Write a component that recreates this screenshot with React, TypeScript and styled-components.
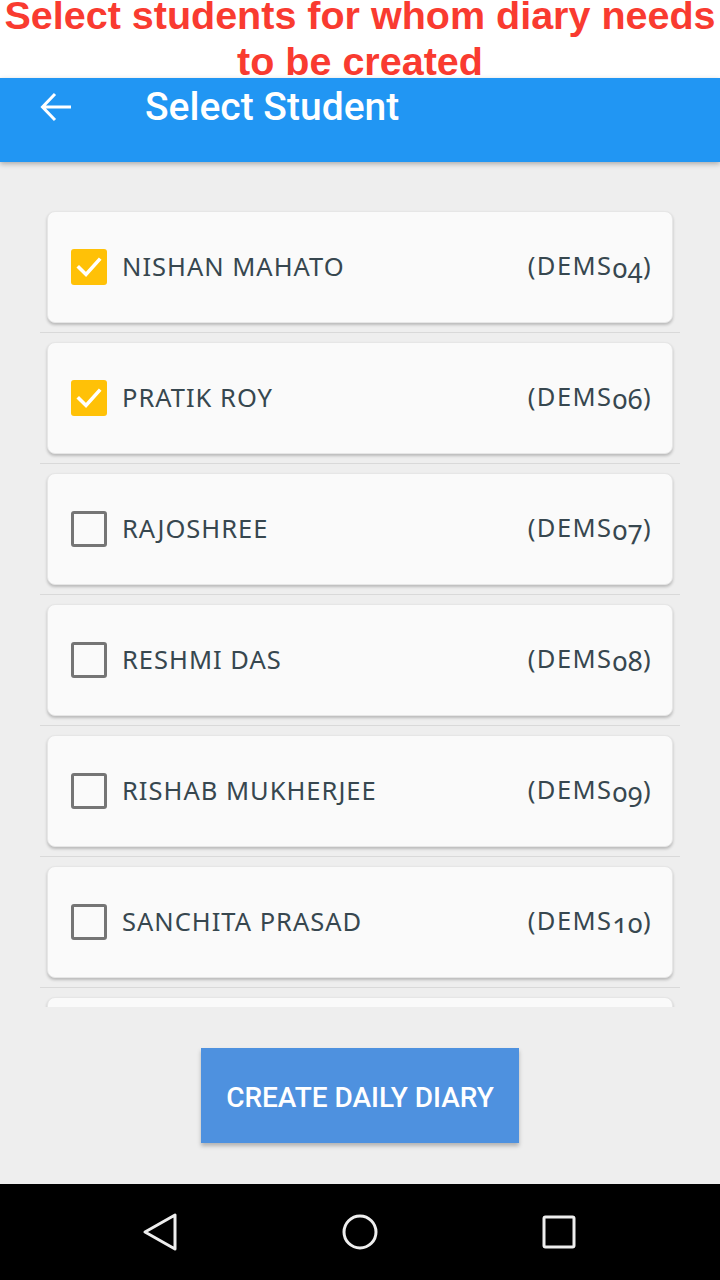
import React from 'react';
import styled, { createGlobalStyle } from 'styled-components';

const GlobalStyle = createGlobalStyle`
  html, body {
    margin: 0;
    padding: 0;
    background: #eeeeee;
  }
  * {
    box-sizing: border-box;
  }
`;

interface Student {
  id: string;
  name: string;
  code: string;
  checked: boolean;
}

const students: Student[] = [
  { id: '04', name: 'NISHAN MAHATO', code: '04', checked: true },
  { id: '06', name: 'PRATIK ROY', code: '06', checked: true },
  { id: '07', name: 'RAJOSHREE', code: '07', checked: false },
  { id: '08', name: 'RESHMI DAS', code: '08', checked: false },
  { id: '09', name: 'RISHAB MUKHERJEE', code: '09', checked: false },
  { id: '10', name: 'SANCHITA PRASAD', code: '10', checked: false },
  { id: '11', name: 'SHREYA SEN', code: '11', checked: false },
];

const Page = styled.div`
  width: 720px;
  height: 1280px;
  display: flex;
  flex-direction: column;
  background: #eeeeee;
  overflow: hidden;
`;

const Banner = styled.div`
  height: 78px;
  flex-shrink: 0;
  background: #ffffff;
  overflow: hidden;
  text-align: center;
  font-family: 'Liberation Sans', Arial, sans-serif;
  font-weight: 700;
  font-size: 39.5px;
  line-height: 46px;
  color: #f93b30;
  white-space: nowrap;
`;

const BannerText = styled.div`
  margin-top: -8px;
`;

const AppBar = styled.div`
  height: 84px;
  flex-shrink: 0;
  background: #2196f3;
  box-shadow: 0 2px 5px rgba(0, 0, 0, 0.28);
  position: relative;
  z-index: 1;
`;

const AppBarRow = styled.div`
  height: 58px;
  display: flex;
  align-items: center;
  padding-left: 40px;
`;

const BackButton = styled.div`
  width: 32px;
  height: 30px;
  display: flex;
  align-items: center;
  justify-content: center;
  margin-right: 73px;
`;

const Title = styled.div`
  font-family: Roboto, 'Noto Sans', sans-serif;
  font-weight: 500;
  font-size: 39px;
  color: #ffffff;
  line-height: 46px;
`;

const ListArea = styled.div`
  height: 845px;
  flex-shrink: 0;
  overflow: hidden;
  padding: 40px 40px 0;
`;

const Row = styled.div`
  padding: 9px 7px;
  border-bottom: 1px solid #d9d9d9;
`;

const Card = styled.div`
  height: 112px;
  background: #fafafa;
  border-radius: 8px;
  border: 1px solid #e6e6e6;
  box-shadow: 0 2px 3px rgba(0, 0, 0, 0.22);
  display: flex;
  align-items: center;
  padding: 0 20px 0 23px;
`;

const Box = styled.div<{ $checked: boolean }>`
  width: 36px;
  height: 36px;
  border-radius: 3px;
  flex-shrink: 0;
  display: flex;
  align-items: center;
  justify-content: center;
  background: ${p => (p.$checked ? '#ffc107' : 'transparent')};
  border: ${p => (p.$checked ? 'none' : '3px solid #757575')};
`;

const Name = styled.div`
  flex: 1;
  margin-left: 15px;
  font-family: 'Noto Sans', 'Open Sans', sans-serif;
  font-size: 25.5px;
  color: #37474f;
  letter-spacing: 1px;
  line-height: 30px;
  margin-top: -2px;
`;

const Code = styled.div`
  font-family: 'Noto Sans', 'Open Sans', sans-serif;
  font-size: 25.5px;
  color: #37474f;
  letter-spacing: 1.4px;
  line-height: 30px;
  margin-top: -2px;
`;

const Digits = styled.span`
  font-variant-numeric: oldstyle-nums;
  font-feature-settings: 'onum' 1;
  font-size: 27px;
  vertical-align: -3px;
  letter-spacing: 0.5px;
`;

const Footer = styled.div`
  flex: 1;
  display: flex;
  align-items: center;
  justify-content: center;
`;

const CreateButton = styled.button`
  width: 318px;
  height: 95px;
  border: none;
  border-radius: 0;
  background: #4e91df;
  color: #ffffff;
  font-family: Roboto, sans-serif;
  font-weight: 500;
  font-size: 28px;
  box-shadow: 0 3px 4px rgba(0, 0, 0, 0.25);
  padding: 4px 0 0;
`;

const NavBar = styled.div`
  height: 96px;
  flex-shrink: 0;
  background: #000000;
  display: flex;
  align-items: center;
  justify-content: space-between;
  padding: 0 142px 0 141px;
`;

const NavIcon = styled.div`
  width: 38px;
  height: 40px;
  display: flex;
  align-items: center;
  justify-content: center;
`;

const Check = () => (
  <svg width="26" height="22" viewBox="0 0 26 22">
    <path d="M3 11.5 L10 18.5 L23 4" fill="none" stroke="#fff" strokeWidth="3.6" strokeLinecap="square" />
  </svg>
);

export default function App() {
  return (
    <>
      <GlobalStyle />
      <Page>
        <Banner>
          <BannerText>
            Select students for whom diary needs
            <br />
            to be created
          </BannerText>
        </Banner>
        <AppBar>
          <AppBarRow>
            <BackButton>
              <svg width="32" height="30" viewBox="0 0 32 30">
                <path d="M31 15 H3 M15 2 L2.5 15 L15 28" fill="none" stroke="#fff" strokeWidth="3" />
              </svg>
            </BackButton>
            <Title>Select Student</Title>
          </AppBarRow>
        </AppBar>
        <ListArea>
          {students.map(s => (
            <Row key={s.id}>
              <Card>
                <Box $checked={s.checked}>{s.checked && <Check />}</Box>
                <Name>{s.name}</Name>
                <Code>
                  (DEMS<Digits>{s.code}</Digits>)
                </Code>
              </Card>
            </Row>
          ))}
        </ListArea>
        <Footer>
          <CreateButton>CREATE DAILY DIARY</CreateButton>
        </Footer>
        <NavBar>
          <NavIcon>
            <svg width="36" height="40" viewBox="0 0 36 40">
              <path d="M33 3 V37 L3 20 Z" fill="none" stroke="#eee" strokeWidth="3" strokeLinejoin="round" />
            </svg>
          </NavIcon>
          <NavIcon>
            <svg width="38" height="38" viewBox="0 0 38 38">
              <circle cx="19" cy="19" r="16" fill="none" stroke="#eee" strokeWidth="3" />
            </svg>
          </NavIcon>
          <NavIcon>
            <svg width="34" height="34" viewBox="0 0 34 34">
              <rect x="2" y="2" width="30" height="30" rx="1.5" fill="none" stroke="#eee" strokeWidth="3" />
            </svg>
          </NavIcon>
        </NavBar>
      </Page>
    </>
  );
}
